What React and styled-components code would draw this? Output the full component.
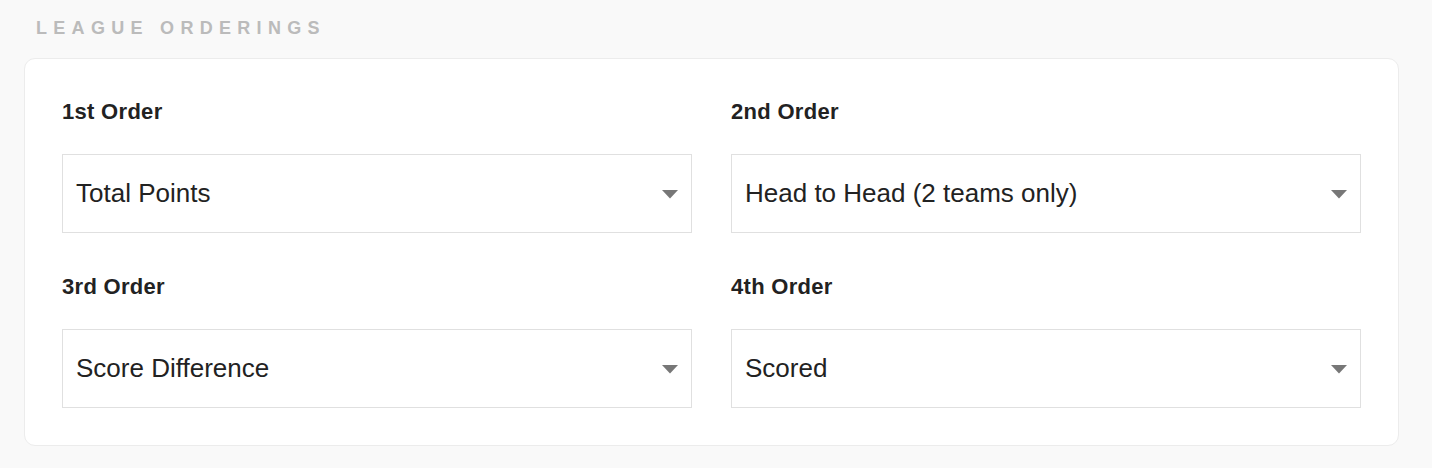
import React from "react";
import styled, { createGlobalStyle } from "styled-components";

const GlobalStyle = createGlobalStyle`
  html, body {
    margin: 0;
    padding: 0;
    background: #f9f9f9;
    font-family: "Liberation Sans", Arial, Helvetica, sans-serif;
  }
`;

const orders = [
  { label: "1st Order", value: "Total Points" },
  { label: "2nd Order", value: "Head to Head (2 teams only)" },
  { label: "3rd Order", value: "Score Difference" },
  { label: "4th Order", value: "Scored" },
];

const Caret = () => (
  <svg width="16" height="9" viewBox="0 0 16 9">
    <path d="M0 0 L16 0 L8 8.5 Z" fill="#777" />
  </svg>
);

const Settings = () => {
  return (
    <Page>
      <GlobalStyle />
      <SectionTitle>League Orderings</SectionTitle>
      <Card>
        <Grid>
          {orders.map((o) => (
            <Field key={o.label}>
              <Label>{o.label}</Label>
              <SelectBox>
                <span>{o.value}</span>
                <Caret />
              </SelectBox>
            </Field>
          ))}
        </Grid>
      </Card>
    </Page>
  );
};

const Page = styled.div`
  padding: 18px 33px 22px 24px;
`;

const SectionTitle = styled.h2`
  margin: 0 0 19px 12px;
  font-size: 18px;
  line-height: 21px;
  font-weight: 700;
  letter-spacing: 6.3px;
  text-transform: uppercase;
  color: #bbbbbb;
`;

const Card = styled.div`
  background: #fff;
  border: 1px solid #ececec;
  border-radius: 11px;
  padding: 41px 37px 37px 37px;
`;

const Grid = styled.div`
  display: grid;
  grid-template-columns: 1fr 1fr;
  column-gap: 39px;
  row-gap: 42px;
`;

const Field = styled.div`
  display: flex;
  flex-direction: column;
  gap: 30px;
`;

const Label = styled.div`
  font-size: 22px;
  line-height: 24px;
  font-weight: 700;
  letter-spacing: 0.3px;
  color: #222;
`;

const SelectBox = styled.div`
  height: 79px;
  box-sizing: border-box;
  border: 1px solid #e0e0e0;
  display: flex;
  align-items: center;
  justify-content: space-between;
  padding: 0 13px 0 13px;
  font-size: 26px;
  color: #222;

  svg {
    margin-top: 2px;
  }
`;

export default Settings;
